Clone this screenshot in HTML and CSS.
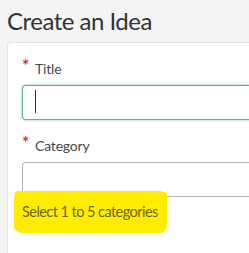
FILE: index.html
```html
<html>

<head>
    <title>Create an Idea</title>
    <link rel="stylesheet" href="styles.css">
</head>

<body>
    <h1 class="page-title">Create an Idea</h1>
    <div class="card">
        <div class="field">
            <label class="field-label"><span class="req">*</span>Title</label>
            <div class="text-input focused"><span class="caret"></span></div>
        </div>
        <div class="field">
            <label class="field-label"><span class="req">*</span>Category</label>
            <div class="text-input"></div>
            <div class="hint">Select 1 to 5 categories</div>
        </div>
    </div>
</body>

</html>
```

FILE: styles.css
```css
html, body {
    margin: 0;
    padding: 0;
    background: #f4f4f4;
    overflow: hidden;
}

body {
    font-family: "Lato", "Open Sans", sans-serif;
    padding-left: 7px;
    height: 253px;
    box-sizing: border-box;
}

.page-title {
    margin: 0;
    padding-top: 6px;
    height: 36px;
    font-size: 24px;
    font-weight: 400;
    letter-spacing: -0.5px;
    color: #333;
}

.card {
    background: #fff;
    border: 1px solid #e4e4e4;
    border-right: none;
    border-bottom: none;
    border-radius: 4px 0 0 0;
    height: 211px;
    box-sizing: border-box;
    overflow: hidden;
    padding: 14px 0 0 14px;
}

.field {
    margin-bottom: 14px;
}

.field-label {
    display: block;
    font-size: 14px;
    letter-spacing: -0.2px;
    color: #474747;
    height: 24px;
    line-height: 24px;
    margin-bottom: 4px;
}

.req {
    color: #d1342b;
    font-size: 17px;
    font-weight: 700;
    vertical-align: top;
    line-height: 18px;
    margin-right: 6px;
}

.text-input {
    height: 33px;
    border: 1px solid #b3b3b3;
    border-right: none;
    border-radius: 4px 0 0 4px;
}

.text-input.focused {
    border: 1px solid #5fae9f;
    border-right: none;
    box-shadow: 0 0 2px 1px rgba(95, 174, 159, 0.35);
}

.caret {
    display: block;
    width: 1px;
    height: 23px;
    margin: 4px 0 0 12px;
    background: #333;
}

.hint {
    display: inline-block;
    margin: -6px 0 0 -8px;
    padding: 12px 9px 13px 8px;
    background: #ffec00;
    border-radius: 3px 8px 6px 10px / 8px 4px 10px 6px;
    font-size: 14.5px;
    letter-spacing: -0.55px;
    color: #69681b;
}
```
